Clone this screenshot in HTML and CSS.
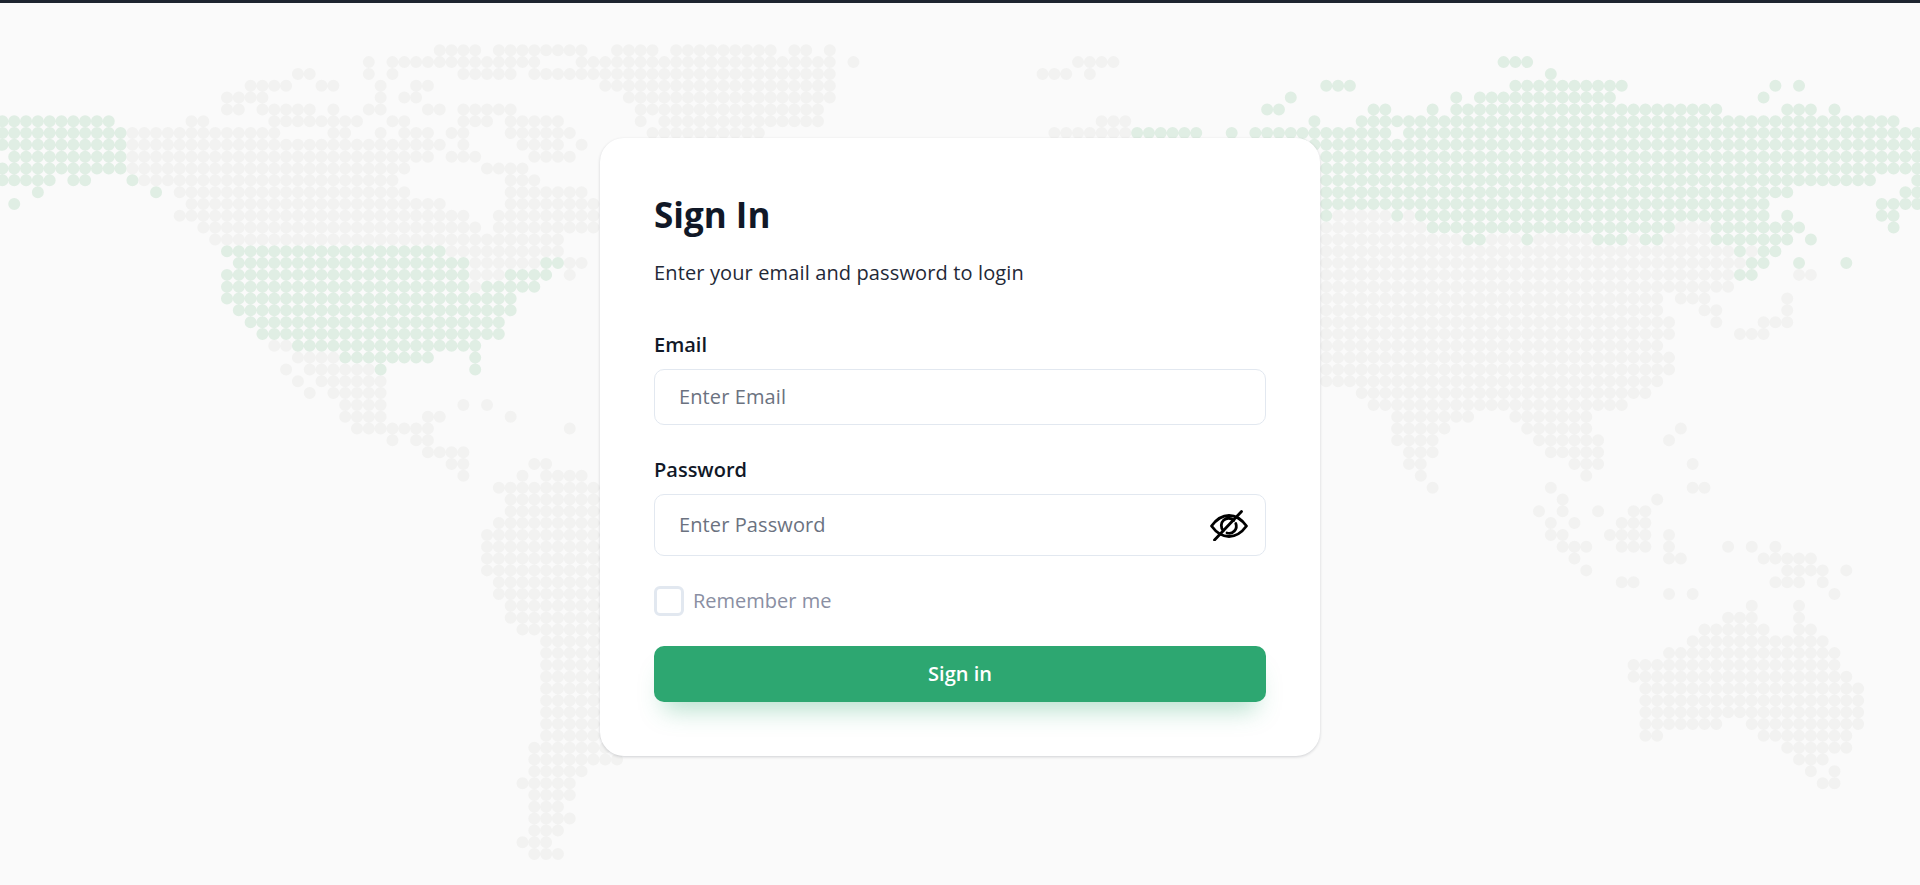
FILE: index.html
```html
<!DOCTYPE html>
<html lang="en">
<head>
<meta charset="utf-8">
<title>Sign In</title>
<link rel="stylesheet" href="styles.css">
</head>
<body>
<svg class="world" viewBox="0 0 1920 885" aria-hidden="true">
<g class="world-grid" transform="translate(2.4 50.3) scale(11.82)">
<path class="land" d="M37 0H40.01M42 0H49.01M52 0H55.01M57 0H65.01M67 0H68.01M70 0h.01
M31 1h.01M33 1H45.01M49 1H70.01M72 1h.01M91 1H94.01
M25 2H26.01M31 2h.01M33 2h.01M39 2H43.01M45 2H70.01M88 2H90.01M92 2h.01
M21 3H24.01M27 3H28.01M32 3h.01M35 3H36.01M51 3H70.01
M19 4H22.01M32 4h.01M34 4H35.01M53 4H70.01
M19 5H20.01M22 5H26.01M28 5h.01M31 5H32.01M36 5H37.01M39 5H43.01M54 5H69.01
M16 6H17.01M23 6H30.01M33 6H34.01M39 6H41.01M43 6H47.01M54 6h.01M56 6H69.01M93 6H95.01
M11 7H23.01M28 7H29.01M32 7h.01M34 7H36.01M38 7H39.01M43 7H48.01M55 7H64.01M89 7H95.01
M11 8H37.01M39 8h.01M44 8H47.01M49 8h.01
M11 9H36.01M38 9H40.01M45 9H48.01
M11 10H34.01M41 10H44.01
M12 11H33.01M43 11H45.01
M15 12H34.01M43 12H49.01
M16 13H37.01M43 13H50.01
M15 14H39.01M42 14H50.01M113 14H117.01M119 14h.01
M17 15H40.01M42 15H50.01M112 15H120.01M142 15H144.01
M18 16H47.01M112 16H123.01M126 16H128.01M130 16H134.01M138 16h.01M141 16H144.01
M38 17H47.01M112 17H146.01M148 17h.01
M40 18H45.01M48 18H49.01M112 18H147.01
M40 19H42.01M48 19h.01M112 19H146.01M152 19H153.01
M40 20h.01M112 20H146.01
M112 21H140.01M142 21H144.01M151 21h.01
M112 22H140.01M144 22H145.01M151 22h.01
M112 23H141.01M145 23h.01M149 23H151.01
M112 24H141.01M147 24H149.01
M23 25H24.01M112 25H140.01
M25 26H28.01M112 26H141.01
M24 27h.01M26 27H31.01M112 27H141.01
M25 28h.01M27 28H32.01M112 28H140.01
M26 29h.01M28 29H32.01M115 29H139.01
M29 30H32.01M39 30h.01M41 30h.01M116 30H137.01
M29 31H32.01M36 31H37.01M43 31h.01M118 31H124.01M128 31H134.01
M30 32H36.01M48 32h.01M118 32H122.01M129 32H134.01M142 32h.01
M33 33h.01M35 33H36.01M118 33H121.01M130 33H135.01M141 33h.01
M36 34H39.01M119 34H121.01M131 34H135.01
M38 35H39.01M45 35H46.01M119 35H120.01M133 35H135.01M143 35h.01
M39 36h.01M44 36h.01M46 36H49.01M120 36h.01M134 36h.01
M42 37H51.01M121 37h.01M131 37h.01M143 37H144.01
M43 38H51.01M132 38h.01M140 38h.01
M43 39H51.01M130 39h.01M132 39h.01M135 39h.01M138 39H139.01
M42 40H51.01M131 40h.01M133 40h.01M137 40H139.01
M41 41H51.01M131 41H132.01M136 41H139.01M141 41h.01
M41 42H51.01M132 42H134.01M137 42H139.01M141 42h.01M146 42h.01M148 42h.01M150 42h.01
M41 43H51.01M133 43h.01M141 43H142.01M149 43H153.01
M41 44H51.01M134 44h.01M151 44H154.01M156 44h.01
M42 45H51.01M137 45H138.01M150 45H152.01M154 45h.01
M42 46H51.01M141 46h.01M143 46h.01M155 46h.01
M43 47H51.01M148 47h.01M152 47h.01
M43 48H51.01M146 48H148.01M152 48h.01
M44 49H51.01M144 49H149.01M152 49H153.01
M46 50H51.01M143 50H154.01
M46 51H51.01M141 51H155.01
M46 52H51.01M138 52H155.01
M46 53H51.01M138 53H156.01
M46 54H51.01M139 54H157.01
M46 55H51.01M139 55H157.01
M46 56H51.01M139 56H157.01
M46 57H51.01M139 57H145.01M148 57H157.01
M46 58H51.01M139 58H140.01M149 58H156.01
M45 59H51.01M151 59H156.01
M45 60H52.01M152 60H154.01
M45 61H49.01M153 61h.01M155 61h.01
M44 62H48.01M154 62H155.01
M45 63H48.01
M45 64H47.01
M45 65H48.01
M45 66H47.01
M44 67H46.01
M45 68H47.01"/>
<path class="land land-active" d="M127 1H129.01
M131 2h.01
M112 3H114.01M128 3H137.01M150 3h.01M152 3h.01
M109 4h.01M123 4h.01M125 4H136.01M149 4h.01
M107 5H108.01M116 5H117.01M121 5h.01M123 5H145.01M151 5H153.01M155 5h.01
M0 6H9.01M111 6h.01M115 6H160.01
M0 7H10.01M96 7H101.01M104 7h.01M106 7H117.01M119 7H162.01
M0 8H10.01M110 8H162.01
M1 9H10.01M112 9H162.01
M0 10H10.01M112 10H162.01
M0 11H4.01M6 11H7.01M11 11h.01M112 11H158.01M162 11h.01
M3 12h.01M13 12h.01M112 12H151.01M161 12H162.01
M1 13h.01M112 13H149.01M159 13H162.01
M112 14h.01M118 14h.01M120 14H149.01M151 14h.01M159 14H160.01
M121 15H141.01M145 15H152.01M160 15h.01
M124 16H125.01M129 16h.01M135 16H137.01M139 16H140.01M145 16H151.01M153 16h.01
M19 17H37.01M147 17h.01M149 17H150.01
M20 18H39.01M46 18H47.01M148 18H149.01M152 18h.01M156 18h.01
M19 19H39.01M43 19H46.01M147 19H148.01
M19 20H39.01M41 20H45.01
M19 21H43.01
M20 22H43.01
M21 23H42.01
M22 24H42.01
M25 25H40.01
M29 26H36.01M40 26h.01
M32 27h.01M40 27h.01"/>
</g>
</svg>
<div class="topbar"></div>
<main class="page">
<section class="card">
<h1 class="title">Sign In</h1>
<p class="subtitle">Enter your email and password to login</p>
<form class="form">
<label class="label" for="email">Email</label>
<input class="input" id="email" type="email" placeholder="Enter Email">
<label class="label label-spaced" for="password">Password</label>
<div class="password">
<input class="password-input" id="password" type="password" placeholder="Enter Password">
<button class="eye" type="button" aria-label="Show password">
<svg class="eye-icon" viewBox="0 -1 40 32" aria-hidden="true"><path d="M2.500 16C8 8.500 13.800 5.500 20 5.500S32 8.500 37.500 16C32 23.500 26.200 26.500 20 26.500S8 23.500 2.500 16Z"/><path d="M14.300 20.500A7.200 7.200 0 0 1 24.800 10.500M26.800 13.500A7.200 7.200 0 0 1 18 23"/><path d="M32.500 1.500 5.500 30"/></svg>
</button>
</div>
<label class="remember"><input class="check" type="checkbox"><span class="remember-text">Remember me</span></label>
<button class="submit" type="button">Sign in</button>
</form>
</section>
</main>
</body>
</html>
```
FILE: styles.css
```css
* { box-sizing: border-box; }
html, body { margin: 0; height: 100%; }
body {
  background: #fafafa;
  font-family: "Open Sans", "Noto Sans", sans-serif;
  color: #111827;
  overflow: hidden;
  position: relative;
}
.world {
  position: absolute;
  left: 0;
  top: 0;
  width: 1920px;
  height: 885px;
}
.land {
  fill: none;
  stroke: #f2f2f1;
  stroke-width: 1.015;
  stroke-linecap: round;
  stroke-dasharray: 0 1;
}
.land-active { stroke: #e0eee4; }
.topbar {
  position: relative;
  height: 3px;
  background: #1d2430;
}
.page {
  position: relative;
  display: flex;
  justify-content: center;
  padding-top: 135px;
}
.card {
  width: 720px;
  height: 618px;
  padding: 55px 54px 54px;
  background: #fff;
  border-radius: 24px;
  box-shadow: 0 1px 3px rgba(16, 24, 40, .18);
}
.title {
  margin: 0;
  font-size: 35px;
  line-height: 44px;
  font-weight: 700;
  color: #111827;
}
.subtitle {
  margin: 24px 0 0;
  font-size: 20px;
  line-height: 24px;
  letter-spacing: .13px;
  color: #1f2937;
}
.form {
  display: flex;
  flex-direction: column;
  margin-top: 48px;
}
.label {
  font-size: 20px;
  line-height: 24px;
  font-weight: 600;
  color: #111827;
  margin-bottom: 12px;
}
.label-spaced { margin-top: 33px; }
.input, .password-input {
  font: inherit;
  font-size: 20px;
  letter-spacing: .1px;
  color: #111827;
  background: transparent;
  outline: none;
}
.input::placeholder, .password-input::placeholder { color: #6b7280; opacity: 1; }
.input {
  height: 56px;
  padding: 0 24px 2px;
  border: 1px solid #e2e8f0;
  border-radius: 10px;
}
.password {
  display: flex;
  align-items: center;
  height: 62px;
  padding: 0 16px 0 24px;
  border: 1px solid #e2e8f0;
  border-radius: 10px;
}
.password-input {
  flex: 1;
  border: 0;
  padding: 0 0 2px;
  min-width: 0;
}
.eye {
  display: flex;
  padding: 0;
  border: 0;
  background: none;
}
.eye-icon {
  width: 40px;
  height: 32px;
  fill: none;
  stroke: #000;
  stroke-width: 2.8;
  stroke-linecap: round;
  stroke-linejoin: round;
}
.remember {
  display: flex;
  align-items: center;
  gap: 9px;
  margin-top: 30px;
  font-size: 20px;
  color: #8a8fa3;
}
.remember-text { padding-bottom: 2px; }
.check {
  appearance: none;
  width: 30px;
  height: 30px;
  margin: 0;
  background: #fff;
  border: 3px solid #e2e8f0;
  border-radius: 6px;
}
.submit {
  height: 56px;
  margin-top: 30px;
  padding: 0 0 1px;
  border: 0;
  border-radius: 10px;
  background: #2da771;
  color: #fff;
  font: inherit;
  font-size: 20px;
  font-weight: 600;
  box-shadow: 0 18px 24px -10px rgba(45, 167, 113, .35);
}
```
